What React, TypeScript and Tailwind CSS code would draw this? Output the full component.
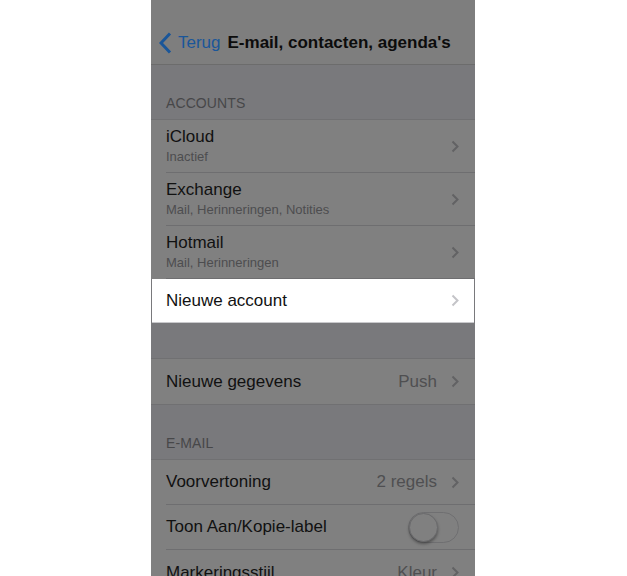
interface Row {
  title: string;
  subtitle?: string;
  value?: string;
  toggle?: boolean;
  last?: boolean;
}

const accounts: Row[] = [
  { title: "iCloud", subtitle: "Inactief" },
  { title: "Exchange", subtitle: "Mail, Herinneringen, Notities" },
  { title: "Hotmail", subtitle: "Mail, Herinneringen" },
];

const mail: Row[] = [
  { title: "Voorvertoning", value: "2 regels" },
  { title: "Toon Aan/Kopie-label", toggle: true },
  { title: "Markeringsstijl", value: "Kleur", last: true },
];

const Disclosure = ({ light }: { light?: boolean }) => (
  <svg width="8" height="13" viewBox="0 0 8 13" className={light ? "text-[#c4c4c8]" : "text-[#626264]"}>
    <polyline points="1.5,1.5 6.5,6.5 1.5,11.5" fill="none" stroke="currentColor" strokeWidth="2" />
  </svg>
);

const Toggle = () => (
  <div className="relative w-[51px] h-[31px] rounded-full border border-[#6f6f71] bg-[#808080]">
    <div className="absolute left-0 top-0 w-[29px] h-[29px] rounded-full bg-[#808080] border border-[#6a6a6c] shadow-[0_2px_3px_rgba(0,0,0,0.35)]" />
  </div>
);

const Cell = ({ row }: { row: Row }) => {
  const tall = !!row.subtitle;
  return (
    <div className={`flex items-center pl-[15px] ${tall ? "h-[53px]" : "h-[45px]"}`}>
      <div
        className={`flex-1 flex items-center h-full pr-[16px] ${
          row.last ? "" : "border-b border-[#6e6e70]"
        }`}
      >
        <div className="flex-1 flex flex-col justify-center">
          <span className="text-[17px] leading-[20px] text-[#111]">{row.title}</span>
          {row.subtitle && (
            <span className="text-[13px] leading-[16px] text-[#4d4d4f] mt-[2px]">{row.subtitle}</span>
          )}
        </div>
        {row.value && <span className="text-[17px] text-[#4f4f51] mr-[14px]">{row.value}</span>}
        {row.toggle ? <Toggle /> : <Disclosure />}
      </div>
    </div>
  );
};

const SectionHeader = ({ label }: { label: string }) => (
  <div className="h-[55px] flex items-end pb-[5px] pl-[15px] border-b border-[#707072]">
    <span className="text-[14px] text-[#474749] tracking-[0.1px]">{label}</span>
  </div>
);

export default function App() {
  return (
    <div className="min-h-[576px] bg-white font-['Liberation_Sans',Arial,sans-serif]">
      <div className="ml-[151px] w-[324px] h-[576px] overflow-hidden bg-[#79797c]">
        {/* nav bar */}
        <div className="h-[65px] pt-[20px] bg-[#7e7e7e] border-b border-[#6c6c6c]">
          <div className="h-[44px] flex items-center pl-[8px] pt-[2px]">
            <svg width="13" height="22" viewBox="0 0 13 22" className="text-[#1a5699]">
              <polyline points="11,1.5 2,11 11,20.5" fill="none" stroke="currentColor" strokeWidth="3" />
            </svg>
            <span className="text-[17px] text-[#1a5699] ml-[6px]">Terug</span>
            <span className="text-[17px] font-bold text-[#0c0c0c] ml-[7px]">E-mail, contacten, agenda's</span>
          </div>
        </div>

        <SectionHeader label="ACCOUNTS" />
        <div className="bg-[#808080]">
          {accounts.map((r) => (
            <Cell key={r.title} row={r} />
          ))}
        </div>
        <div className="mx-[1px] h-[44px] bg-white border-b border-[#c9c9cc] flex items-center pl-[14px] pr-[15px]">
          <span className="flex-1 text-[17px] text-[#111]">Nieuwe account</span>
          <Disclosure light />
        </div>

        <div className="h-[36px] border-b border-[#707072]" />
        <div className="bg-[#808080] border-b border-[#707072]">
          <Cell row={{ title: "Nieuwe gegevens", value: "Push", last: true }} />
        </div>

        <SectionHeader label="E-MAIL" />
        <div className="bg-[#808080]">
          {mail.map((r) => (
            <Cell key={r.title} row={r} />
          ))}
        </div>
      </div>
    </div>
  );
}
